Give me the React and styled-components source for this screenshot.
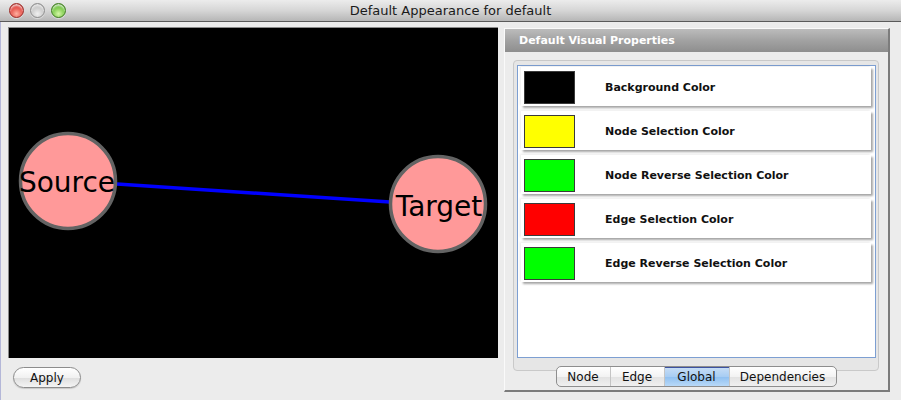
import React from "react";
import styled, { createGlobalStyle } from "styled-components";

const Global = createGlobalStyle`
  html, body {
    margin: 0;
    padding: 0;
    background: #ececec;
  }
`;

const Window = styled.div`
  width: 901px;
  height: 400px;
  background: #ececec;
  font-family: "DejaVu Sans", "Liberation Sans", sans-serif;
  display: flex;
  flex-direction: column;
  overflow: hidden;
`;

const TitleBar = styled.div`
  height: 21px;
  flex: none;
  display: flex;
  align-items: center;
  justify-content: center;
  position: relative;
  background: linear-gradient(#ececec, #d6d6d6 50%, #b6b6b6);
  border-bottom: 1px solid #5a5a5a;
  font-size: 13px;
  color: #1a1a1a;
`;

const Lights = styled.div`
  position: absolute;
  left: 9px;
  top: 3px;
  display: flex;
  gap: 6px;
`;

const Light = styled.span`
  width: 15px;
  height: 15px;
  border-radius: 50%;
  box-sizing: border-box;
  border: 1px solid ${(p) => p.$edge};
  background: radial-gradient(circle at 50% 75%, ${(p) => p.$glow} 0%, ${(p) => p.$base} 62%, ${(p) => p.$edge} 100%);
  box-shadow: inset 0 2px 2px rgba(255, 255, 255, 0.7), 0 1px 1px rgba(255, 255, 255, 0.5);
`;

const Body = styled.div`
  flex: 1;
  display: flex;
  border-left: 1px solid #b4b7d8;
`;

const LeftColumn = styled.div`
  padding: 5px 0 0 7px;
  display: flex;
  flex-direction: column;
  align-items: flex-start;
`;

const Canvas = styled.svg`
  display: block;
  width: 489px;
  height: 330px;
  background: #000;
  border-top: 1px solid #8a8a8a;
  border-left: 1px solid #8a8a8a;
`;

const PillButton = styled.button`
  margin: 9px 0 0 5px;
  width: 68px;
  height: 21px;
  border-radius: 11px;
  border: 1px solid #8c8c8c;
  background: linear-gradient(#ffffff, #f1f1f1 50%, #dedede 51%, #f4f4f4);
  font-family: inherit;
  font-size: 12px;
  color: #111;
  padding: 0;
  box-shadow: 0 1px 1px rgba(0, 0, 0, 0.15);
`;

const Panel = styled.div`
  margin: 6px 0 0 6px;
  width: 383px;
  height: 361px;
  border-top: 1px solid #fafafa;
  border-left: 1px solid #fafafa;
  border-right: 2px solid #7c7c7c;
  border-bottom: 2px solid #7c7c7c;
  display: flex;
  flex-direction: column;
`;

const PanelHeader = styled.div`
  height: 23px;
  flex: none;
  display: flex;
  align-items: center;
  padding-left: 14px;
  background: linear-gradient(#bcbcbc, #a2a2a2 50%, #8e8e8e);
  color: #fff;
  font-size: 11px;
  font-weight: bold;
`;

const PanelBody = styled.div`
  padding: 8px 9px 0 8px;
  display: flex;
  flex-direction: column;
  align-items: center;
`;

const Frame = styled.div`
  width: 366px;
  height: 311px;
  box-sizing: border-box;
  border: 1px solid #c9c9c9;
  border-radius: 4px;
  background: #e6e6e6;
  padding: 4px 2px 0 3px;
`;

const List = styled.div`
  height: 293px;
  box-sizing: border-box;
  background: #fff;
  border: 1px solid #7d9fd2;
  padding: 1px 4px 0 3px;
  display: flex;
  flex-direction: column;
  gap: 5px;
`;

const PropRow = styled.div`
  height: 39px;
  display: flex;
  align-items: flex-start;
  padding: 4px 0 0 3px;
  box-sizing: border-box;
  background: #fff;
  box-shadow: 2px 2px 2px rgba(0, 0, 0, 0.35), -1px -1px 2px rgba(0, 0, 0, 0.08);
`;

const Swatch = styled.div`
  width: 51px;
  height: 33px;
  box-sizing: border-box;
  border: 1px solid #3a3a3a;
  background: ${(p) => p.$color};
  flex: none;
`;

const PropLabel = styled.span`
  margin: 10px 0 0 30px;
  font-size: 11px;
  font-weight: bold;
  color: #111;
`;

const Tabs = styled.div`
  margin-top: -5px;
  display: flex;
  height: 21px;
  box-sizing: border-box;
  border: 1px solid #8e8e8e;
  border-radius: 5px;
  overflow: hidden;
  background: linear-gradient(#ffffff, #f3f3f3 50%, #e2e2e2 51%, #f0f0f0);
`;

const Tab = styled.div`
  width: ${(p) => p.$w}px;
  display: flex;
  align-items: center;
  justify-content: center;
  font-size: 12px;
  color: #111;
  border-left: ${(p) => (p.$first ? "none" : "1px solid #c4c4c4")};
  background: ${(p) =>
    p.$active ? "linear-gradient(#c9def5, #a8cdf3 50%, #8ebff0 51%, #b8d9f8)" : "transparent"};
  box-shadow: ${(p) => (p.$active ? "inset 0 1px 0 #3d52a0" : "none")};
`;

const props = [
  { color: "#000000", label: "Background Color" },
  { color: "#ffff00", label: "Node Selection Color" },
  { color: "#00ff00", label: "Node Reverse Selection Color" },
  { color: "#ff0000", label: "Edge Selection Color" },
  { color: "#00ff00", label: "Edge Reverse Selection Color" },
];

const tabs = [
  { name: "Node", w: 53 },
  { name: "Edge", w: 53 },
  { name: "Global", w: 64, active: true },
  { name: "Dependencies", w: 106 },
];

const NetworkPreview = () => (
  <Canvas viewBox="8 28 489 330">
    <line x1="116" y1="184" x2="389" y2="202" stroke="#0000ff" strokeWidth="3.5" />
    <circle cx="67" cy="181" r="47.5" fill="#ff9999" stroke="#636363" strokeWidth="3.5" />
    <circle cx="437" cy="204" r="47.5" fill="#ff9999" stroke="#636363" strokeWidth="3.5" />
    <text x="66" y="192" textAnchor="middle" fontFamily="DejaVu Sans, sans-serif" fontSize="28" fill="#000">
      Source
    </text>
    <text x="438" y="216" textAnchor="middle" fontFamily="DejaVu Sans, sans-serif" fontSize="28" fill="#000">
      Target
    </text>
  </Canvas>
);

const App = () => {
  return (
    <Window>
      <Global />
      <TitleBar>
        <Lights>
          <Light $base="#e0403a" $glow="#ffb0a0" $edge="#9c2a25" />
          <Light $base="#c4c4c4" $glow="#f0f0f0" $edge="#8e8e8e" />
          <Light $base="#6cc23a" $glow="#d6f7a8" $edge="#3f7d20" />
        </Lights>
        Default Appearance for default
      </TitleBar>
      <Body>
        <LeftColumn>
          <NetworkPreview />
          <PillButton>Apply</PillButton>
        </LeftColumn>
        <Panel>
          <PanelHeader>Default Visual Properties</PanelHeader>
          <PanelBody>
            <Frame>
              <List>
                {props.map((p) => (
                  <PropRow key={p.label}>
                    <Swatch $color={p.color} />
                    <PropLabel>{p.label}</PropLabel>
                  </PropRow>
                ))}
              </List>
            </Frame>
            <Tabs>
              {tabs.map((t, i) => (
                <Tab key={t.name} $w={t.w} $active={t.active} $first={i === 0}>
                  {t.name}
                </Tab>
              ))}
            </Tabs>
          </PanelBody>
        </Panel>
      </Body>
    </Window>
  );
};

export default App;
